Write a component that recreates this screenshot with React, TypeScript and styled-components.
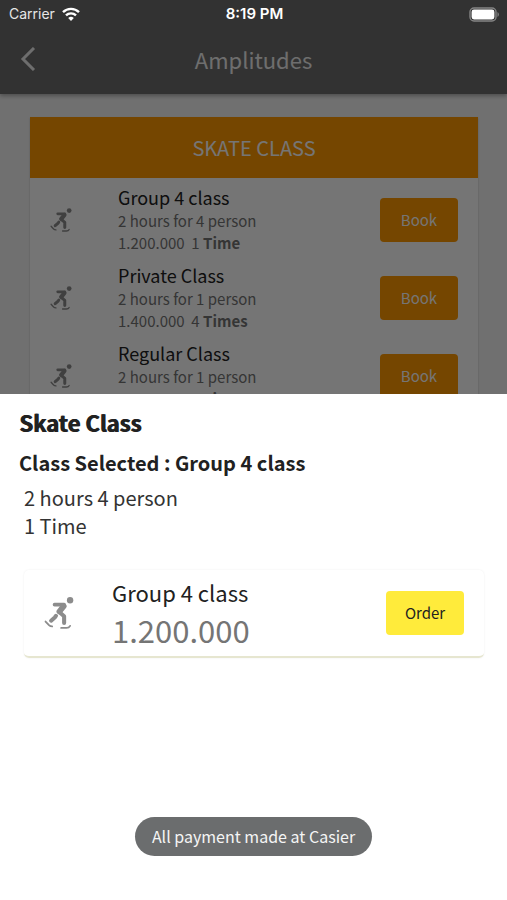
import React from "react";
import styled, { createGlobalStyle } from "styled-components";

const GlobalStyle = createGlobalStyle`
  *, *::before, *::after { box-sizing: border-box; }
  body { margin: 0; background: #f4f4f4; font-family: "Noto Sans CJK SC", "Noto Sans", sans-serif; }
  h1, h2, h3, p, ul { margin: 0; padding: 0; font-weight: 400; }
  button { border: 0; padding: 0; font: inherit; cursor: pointer; }
`;

const Screen = styled.div`
  position: relative;
  height: 100vh;
  overflow: hidden;
  background: #f4f4f4;
`;

const StatusBar = styled.div`
  position: absolute;
  inset: 0 0 auto;
  z-index: 3;
  display: grid;
  grid-template-columns: 1fr auto 1fr;
  align-items: center;
  height: 28px;
  padding: 0 7px 0 9px;
  color: #fff;
  font-family: Inter, sans-serif;
  font-size: 14px;
  line-height: 20px;
`;

const Carrier = styled.div`
  display: flex;
  align-items: center;
  gap: 7px;
  color: #e6e6e6;
`;

const Clock = styled.time`
  font-size: 15px;
  font-weight: 600;
`;

const BatteryIcon = styled.svg`
  justify-self: end;
`;

const AppBar = styled.header`
  position: relative;
  display: grid;
  grid-template-columns: 56px 1fr 56px;
  align-items: center;
  height: 94px;
  padding: 28px 0 4px;
  background: #6d6d6d;
  color: #efefef;
  box-shadow: 0 2px 4px rgba(0, 0, 0, 0.3);
`;

const BackButton = styled.button`
  display: flex;
  align-items: center;
  justify-content: center;
  height: 56px;
  background: none;
  color: inherit;
`;

const AppTitle = styled.h1`
  font-size: 22px;
  line-height: 32px;
  text-align: center;
`;

const ClassCard = styled.section`
  margin: 23px 29px 0 30px;
  background: #fff;
  box-shadow: 0 1px 2px rgba(0, 0, 0, 0.2);
`;

const CardHeading = styled.h2`
  padding: 15px;
  background: #ff9800;
  color: #fff;
  font-size: 20px;
  line-height: 31px;
  text-align: center;
`;

const ClassList = styled.ul`
  padding-top: 2px;
  list-style: none;
`;

const ClassRow = styled.li`
  display: grid;
  grid-template-columns: 68px 1fr auto;
  align-items: center;
  padding: 5px 20px 4px;
`;

const SkaterSvg = styled.svg<{ $large?: boolean }>`
  width: ${(p) => (p.$large ? 30 : 22)}px;
  height: ${(p) => (p.$large ? 32 : 24)}px;
  color: #8c8c8c;
`;

const RowTitle = styled.h3<{ $large?: boolean }>`
  color: #212121;
  font-size: ${(p) => (p.$large ? 22 : 18)}px;
  line-height: ${(p) => (p.$large ? 34 : 25)}px;
`;

const RowDetail = styled.p`
  color: #757575;
  font-size: 15px;
  line-height: 22px;
  white-space: pre;
`;

const ActionButton = styled.button<{ $tone: "orange" | "yellow" }>`
  width: 78px;
  height: 44px;
  border-radius: 4px;
  background: ${(p) => (p.$tone === "orange" ? "#ff9800" : "#ffeb3b")};
  color: ${(p) => (p.$tone === "orange" ? "#fff" : "#212121")};
  font-size: 15px;
`;

const Backdrop = styled.div`
  position: absolute;
  inset: 0;
  z-index: 1;
  background: rgba(0, 0, 0, 0.54);
`;

const Sheet = styled.section`
  position: absolute;
  inset: auto 0 0;
  z-index: 2;
  display: flex;
  flex-direction: column;
  background: #fff;
  padding: 12px 19px 44px;
  color: #212121;
`;

const SheetTitle = styled.h2`
  font-size: 22px;
  font-weight: 700;
  line-height: 32px;
  text-shadow: 1px 0 currentColor;
`;

const SelectedClass = styled.h3`
  margin-top: 10px;
  font-size: 20px;
  font-weight: 700;
  line-height: 30px;
`;

const SheetDetails = styled.div`
  margin-top: 6px;
  padding-left: 5px;
  font-size: 20px;
  line-height: 28px;
  color: #333;
`;

const OrderCard = styled.div`
  display: grid;
  grid-template-columns: 68px 1fr auto;
  align-items: center;
  margin: 30px 4px 0 5px;
  padding: 5px 20px 6px;
  border-bottom: 2px solid #e6e6d0;
  border-radius: 5px;
  box-shadow: 0 0 2px rgba(0, 0, 0, 0.08);
`;

const Price = styled.p`
  color: #757575;
  font-size: 31px;
  line-height: 41px;
`;

const Toast = styled.p`
  align-self: center;
  margin-top: 159px;
  padding: 4px 17px;
  border-radius: 20px;
  background: #6b6d6e;
  color: #f5f5f5;
  font-size: 16px;
  line-height: 31px;
`;

function Skater({ large }: { large?: boolean }) {
  return (
    <SkaterSvg
      $large={large}
      viewBox="0 0 28 30"
      fill="none"
      stroke="currentColor"
      strokeLinecap="round"
      strokeLinejoin="round"
      aria-hidden="true"
    >
      <circle cx="24.4" cy="3" r="3" fill="currentColor" stroke="none" />
      <path d="M9.8 7.2h9" strokeWidth="3.4" />
      <path d="M18.4 8.6l-4 5" strokeWidth="5.4" />
      <path d="M14 13.8l4.8 4.2v6.4" strokeWidth="3.8" />
      <path d="M11.2 17.6l-1.2 1.6-3.4 3" strokeWidth="3.8" />
      <path d="M1.4 23l3.2 3.4q1.2 1.2 3 1.2M16 29h5q2.4 0 3.4-1.9" strokeWidth="1.7" />
    </SkaterSvg>
  );
}

interface SkateClass {
  name: string;
  detail: string;
  price: string;
  count: number;
  unit: string;
}

const classes: SkateClass[] = [
  { name: "Group 4 class", detail: "2 hours for 4 person", price: "1.200.000", count: 1, unit: "Time" },
  { name: "Private Class", detail: "2 hours for 1 person", price: "1.400.000", count: 4, unit: "Times" },
  { name: "Regular Class", detail: "2 hours for 1 person", price: "1.000.000", count: 4, unit: "Times" },
];

export default function App() {
  return (
    <>
      <GlobalStyle />
      <Screen>
        <StatusBar>
          <Carrier>
            Carrier
            <svg width="18" height="14" viewBox="0 0 18 14" fill="none" stroke="#fff" strokeWidth="2.4" aria-hidden="true">
              <path d="M1 5.2a11.4 11.4 0 0 1 16 0" />
              <path d="M4 8.4a7.1 7.1 0 0 1 10 0" />
              <path d="M9 14l-2.8-2.9a4 4 0 0 1 5.6 0z" fill="#fff" stroke="none" />
            </svg>
          </Carrier>
          <Clock>8:19 PM</Clock>
          <BatteryIcon width="31" height="15" viewBox="0 0 31 15" aria-hidden="true">
            <rect x="1" y="1" width="26" height="13" rx="4" fill="none" stroke="#858585" strokeWidth="1.4" />
            <rect x="2.6" y="2.6" width="22.8" height="9.8" rx="2.4" fill="#fff" />
            <path d="M28.5 5v5a3 3 0 0 0 0-5z" fill="#858585" />
          </BatteryIcon>
        </StatusBar>

        <AppBar>
          <BackButton aria-label="Back">
            <svg width="16" height="24" viewBox="0 0 16 24" fill="none" stroke="currentColor" strokeWidth="3" aria-hidden="true">
              <path d="M14 1L3 12l11 11" />
            </svg>
          </BackButton>
          <AppTitle>Amplitudes</AppTitle>
        </AppBar>

        <ClassCard>
          <CardHeading>SKATE CLASS</CardHeading>
          <ClassList>
            {classes.map((c) => (
              <ClassRow key={c.name}>
                <Skater />
                <div>
                  <RowTitle>{c.name}</RowTitle>
                  <RowDetail>{c.detail}</RowDetail>
                  <RowDetail>
                    {`${c.price}  ${c.count} `}
                    <b>{c.unit}</b>
                  </RowDetail>
                </div>
                <ActionButton $tone="orange">Book</ActionButton>
              </ClassRow>
            ))}
          </ClassList>
        </ClassCard>

        <Backdrop />

        <Sheet role="dialog" aria-labelledby="sheet-title">
          <SheetTitle id="sheet-title">Skate Class</SheetTitle>
          <SelectedClass>Class Selected : Group 4 class</SelectedClass>
          <SheetDetails>
            <p>2 hours 4 person</p>
            <p>1 Time</p>
          </SheetDetails>
          <OrderCard>
            <Skater large />
            <div>
              <RowTitle $large>Group 4 class</RowTitle>
              <Price>1.200.000</Price>
            </div>
            <ActionButton $tone="yellow">Order</ActionButton>
          </OrderCard>
          <Toast role="status">All payment made at Casier</Toast>
        </Sheet>
      </Screen>
    </>
  );
}
